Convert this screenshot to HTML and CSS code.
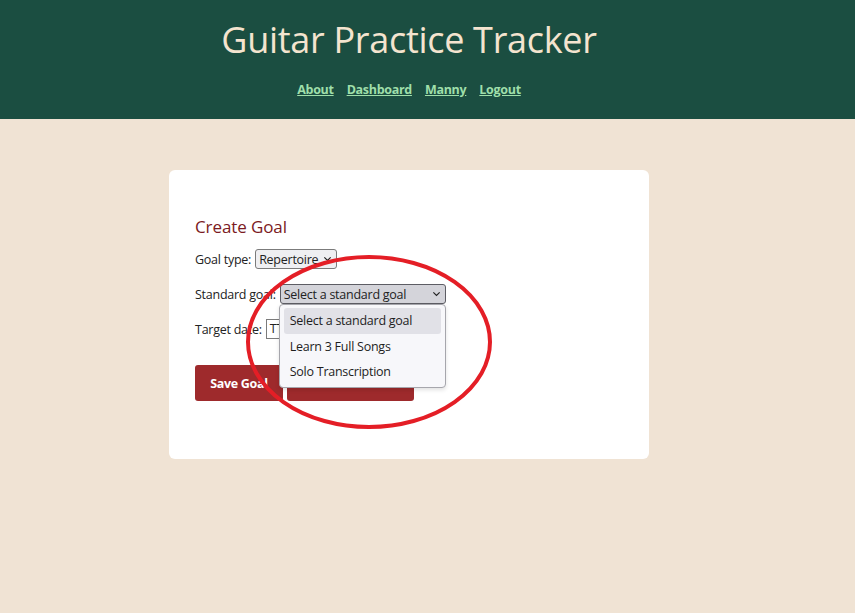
FILE: index.html
```html
<!DOCTYPE html>
<html lang="en">
<head>
<meta charset="utf-8">
<title>Guitar Practice Tracker</title>
<link rel="stylesheet" href="styles.css">
</head>
<body>
<header class="site-header">
  <div class="header-inner">
    <h1 class="site-title">Guitar Practice Tracker</h1>
    <nav class="site-nav">
      <a href="#">About</a>
      <a href="#">Dashboard</a>
      <a href="#">Manny</a>
      <a href="#">Logout</a>
    </nav>
  </div>
</header>
<main class="main">
  <section class="card">
    <h2 class="card-title">Create Goal</h2>
    <form class="goal-form">
      <div class="row">
        <label class="label">Goal type:</label>
        <span class="select select-type">Repertoire<svg class="chev" viewBox="0 0 10 6"><path d="M1.5 1.2 L5 4.6 L8.5 1.2" fill="none" stroke="#222" stroke-width="1.3"/></svg></span>
      </div>
      <div class="row">
        <label class="label">Standard goal:</label>
        <span class="select-wrap">
          <span class="select select-open">Select a standard goal<svg class="chev" viewBox="0 0 10 6"><path d="M1.5 1.2 L5 4.6 L8.5 1.2" fill="none" stroke="#222" stroke-width="1.3"/></svg></span>
          <ul class="dropdown">
            <li class="opt opt-active">Select a standard goal</li>
            <li class="opt">Learn 3 Full Songs</li>
            <li class="opt">Solo Transcription</li>
          </ul>
        </span>
      </div>
      <div class="row">
        <label class="label">Target date:</label>
        <span class="date-input">TT</span>
      </div>
      <div class="buttons">
        <button type="button" class="btn btn-save">Save Goal</button>
        <button type="button" class="btn btn-cancel" aria-label="Cancel"></button>
      </div>
    </form>
  </section>
</main>
<svg class="annotation" width="260" height="186" viewBox="0 0 260 186">
  <ellipse cx="123" cy="88" rx="121" ry="85" fill="none" stroke="#e41e26" stroke-width="4"/>
</svg>
</body>
</html>
```
FILE: styles.css
```css
* { box-sizing: border-box; }
html, body { margin: 0; padding: 0; }
body {
  background: #f0e3d4;
  font-family: "Open Sans", "Noto Sans", sans-serif;
  color: #222;
  min-height: 613px;
}
.site-header {
  background: #1b4e41;
  height: 119px;
}
.header-inner {
  width: 818px;
  text-align: center;
  padding-top: 17px;
}
.site-title {
  margin: 0;
  font-weight: 400;
  font-size: 36px;
  line-height: 46px;
  color: #f4e4cf;
  letter-spacing: -0.3px;
}
.site-nav {
  margin-top: 18px;
  display: flex;
  justify-content: center;
  gap: 13px;
}
.site-nav a {
  color: #9fdfaa;
  font-weight: 700;
  font-size: 12.5px;
  line-height: 18px;
  letter-spacing: -0.3px;
  text-decoration: underline;
}
.main {
  width: 818px;
  padding-top: 51px;
}
.card {
  width: 480px;
  margin: 0 auto;
  background: #fff;
  border-radius: 6px;
  padding: 45px 26px 57px;
  height: 289px;
}
.card-title {
  margin: 0 0 10px;
  font-weight: 400;
  font-size: 17px;
  line-height: 23px;
  letter-spacing: -0.1px;
  color: #7b1a22;
}
.row {
  display: flex;
  align-items: center;
  height: 22px;
  margin-bottom: 13px;
  font-size: 12.5px;
  letter-spacing: -0.25px;
}
.label { margin-right: 4px; }
.select {
  display: inline-flex;
  align-items: center;
  height: 20px;
  border: 1px solid #7b7b7b;
  border-radius: 3px;
  background: #efeff2;
  font-size: 12.5px;
  letter-spacing: -0.25px;
  padding: 0 4px 0 3px;
  white-space: nowrap;
}
.select-type { width: 82px; }
.chev { width: 9px; height: 6px; margin-left: auto; }
.select-wrap { position: relative; display: inline-block; height: 20px; }
.select-open {
  width: 166px;
  height: 20px;
  background: #d4d4da;
  border-color: #5d5d64;
}
.dropdown {
  position: absolute;
  left: -1px;
  top: 20px;
  width: 167px;
  margin: 0;
  padding: 3px 4px;
  list-style: none;
  background: #f7f7fa;
  border: 1px solid #a6a6ac;
  border-radius: 4px;
  box-shadow: 0 2px 4px rgba(0,0,0,0.12);
  z-index: 5;
}
.opt {
  height: 25px;
  line-height: 25px;
  padding-left: 6px;
  font-size: 12.5px;
  letter-spacing: -0.25px;
  border-radius: 3px;
  color: #1e1e1e;
}
.opt-active { background: #e1e1e7; height: 26px; line-height: 26px; }
.date-input {
  display: inline-block;
  height: 20px;
  width: 120px;
  border: 1px solid #7b7b7b;
  font-size: 12.5px;
  line-height: 18px;
  padding-left: 3px;
}
.buttons {
  display: flex;
  gap: 4px;
  margin-top: 25px;
}
.btn {
  height: 36px;
  border: 0;
  border-radius: 3px;
  background: #9e2a2c;
  color: #fff;
  font-family: "Open Sans", "Noto Sans", sans-serif;
  font-weight: 700;
  font-size: 12.5px;
  letter-spacing: -0.3px;
  padding: 0;
  white-space: nowrap;
}
.btn-save { width: 88px; }
.btn-cancel { width: 127px; }
.annotation {
  position: absolute;
  left: 246px;
  top: 254px;
  z-index: 10;
}
```
